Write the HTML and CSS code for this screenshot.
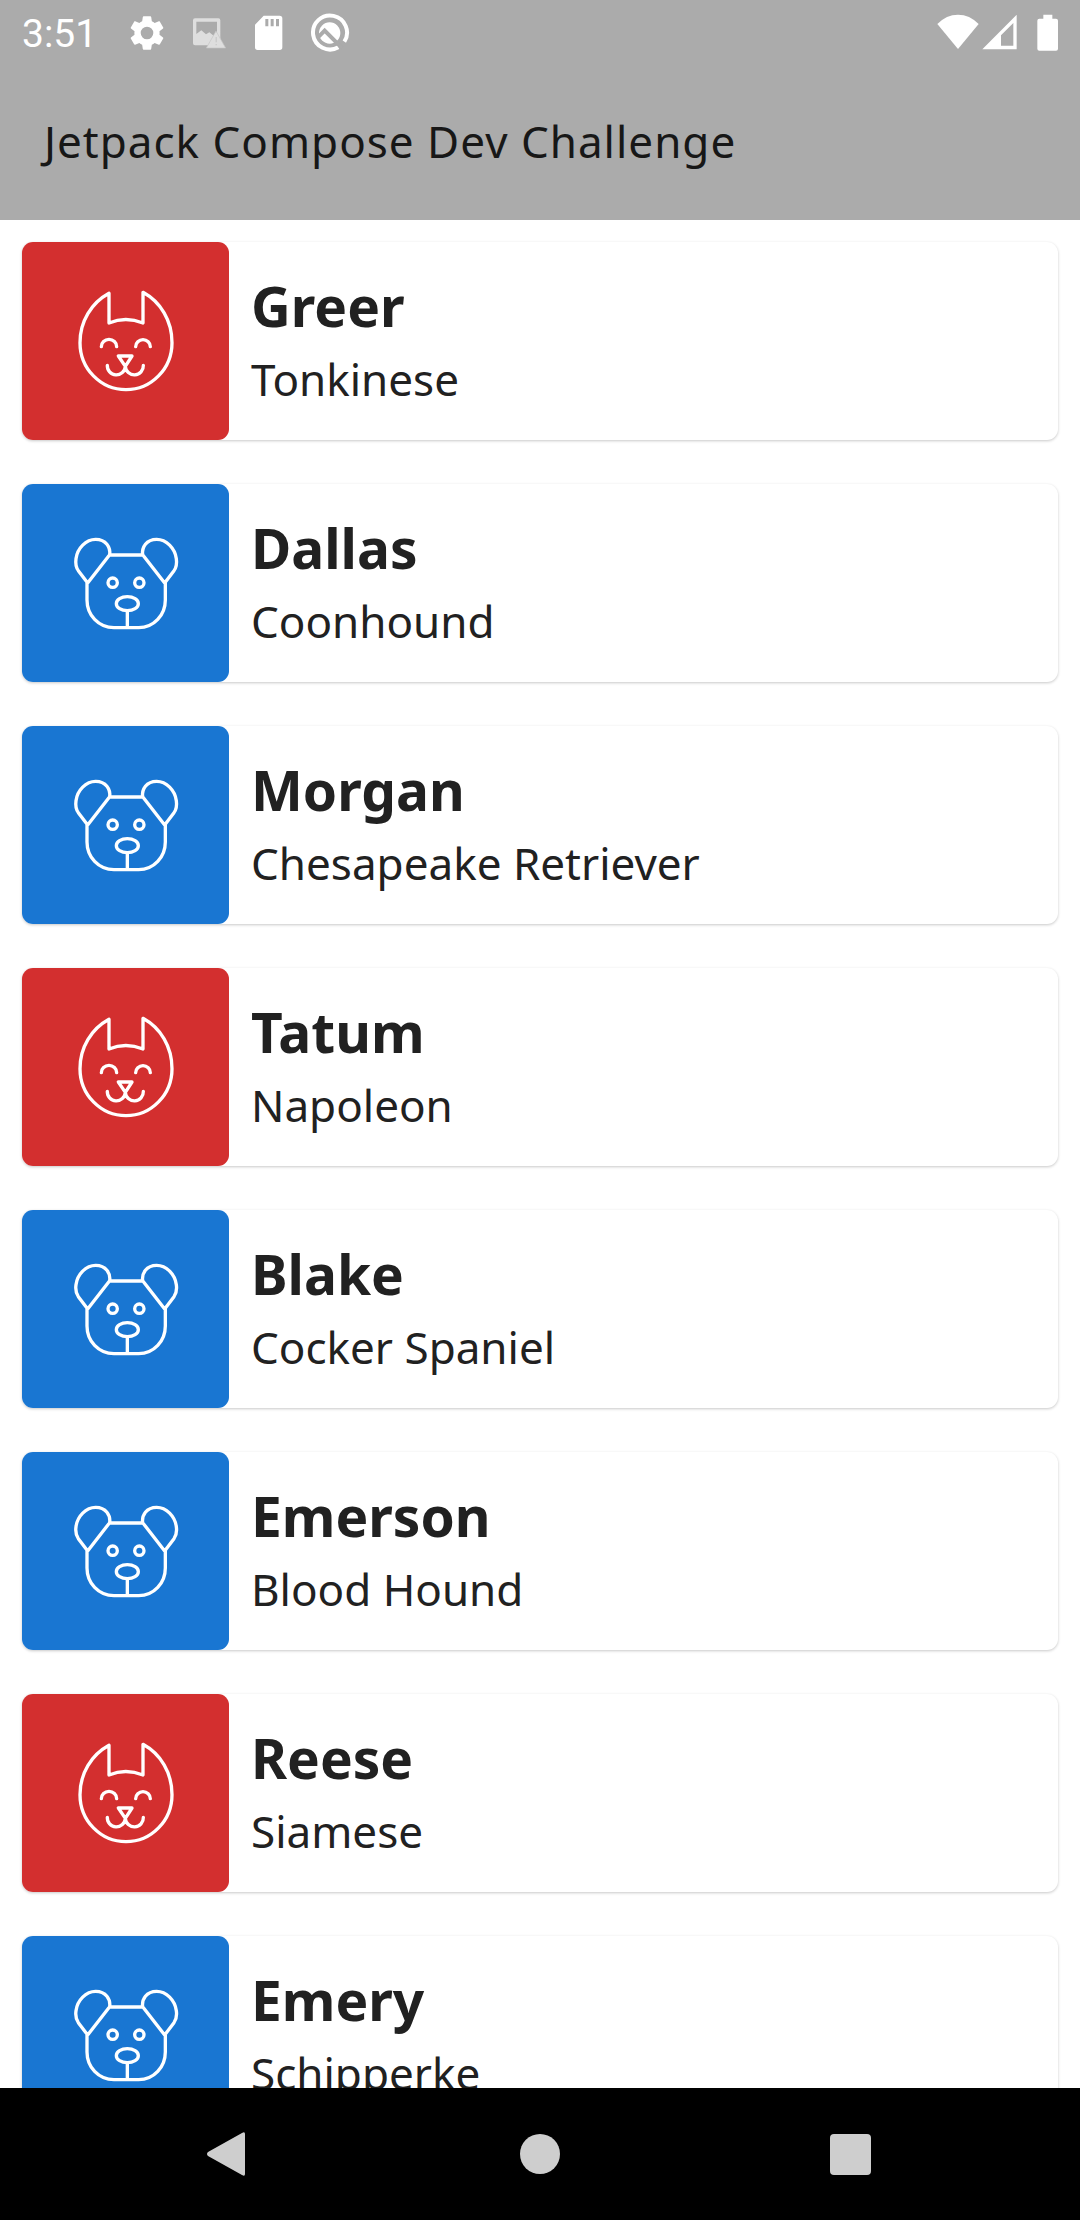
FILE: index.html
```html
<!DOCTYPE html>
<html lang="en">
<head>
<meta charset="utf-8">
<meta name="viewport" content="width=device-width, initial-scale=1">
<title>Jetpack Compose Dev Challenge</title>
<link rel="stylesheet" href="styles.css">
</head>
<body>
<svg class="sprite" aria-hidden="true">
  <symbol id="cat" viewBox="0 15 393 396">
    <path d="M147 70V159Q197 138 249 159V67C302 96 336 152 336 218A138 141 0 0 1 60 218C60 154 94 99 147 70Z"/>
    <path d="M124 230a22 21 0 0 1 46 0M227 230a22 21 0 0 1 44 0M175 258H216L196 289ZM142 286a27 27 0 0 0 54 3a27 27 0 0 0 54-3"/>
  </symbol>
  <symbol id="dog" viewBox="0 -9 393 396">
    <path d="M83 189L55 152C46 139 47 123 48 116C52 85 78 58 107 58C138 58 152 82 149 104ZM314 189L342 152C351 139 350 123 349 116C345 85 319 58 290 58C259 58 245 82 248 104ZM149 105H248M81 187V240C81 285 115 323 162 323H236C282 323 316 285 316 240V187M202 272V323"/>
    <circle cx="158" cy="188" r="14"/><circle cx="238" cy="188" r="14"/><ellipse cx="202" cy="251" rx="33" ry="21"/>
  </symbol>
</svg>
<div class="app">
  <header class="top">
    <div class="status">
      <span class="time">3:51</span>
      <div class="notices">
        <svg class="icon" viewBox="0 0 24 24"><path fill-rule="evenodd" d="M19.14 12.94c.04-.3.06-.61.06-.94 0-.32-.02-.64-.07-.94l2.03-1.58c.18-.14.23-.41.12-.61l-1.92-3.32c-.12-.22-.37-.29-.59-.22l-2.39.96c-.5-.38-1.03-.7-1.62-.94l-.36-2.54c-.04-.24-.24-.41-.48-.41h-3.84c-.24 0-.43.17-.47.41l-.36 2.54c-.59.24-1.13.57-1.62.94l-2.39-.96c-.22-.08-.47 0-.59.22L2.74 8.87c-.12.21-.08.47.12.61l2.03 1.58c-.05.3-.09.63-.09.94s.02.64.07.94l-2.03 1.58c-.18.14-.23.41-.12.61l1.92 3.32c.12.22.37.29.59.22l2.39-.96c.5.38 1.03.7 1.62.94l.36 2.54c.05.24.24.41.48.41h3.84c.24 0 .44-.17.47-.41l.36-2.54c.59-.24 1.13-.56 1.62-.94l2.39.96c.22.08.47 0 .59-.22l1.92-3.32c.12-.22.07-.47-.12-.61zM12 15.6a3.6 3.6 0 1 1 0-7.2 3.6 3.6 0 0 1 0 7.2z"/></svg>
        <svg class="icon icon-dim" viewBox="560 37 126 126"><path fill-rule="evenodd" d="M584 56h70q6 0 6 6v75h-76q-6 0-6-6V62q0-6 6-6zM588 66v37l15-11 14 12 10-6 13 10 10-10V66z"/><path class="edged" d="M647 94l29 51h-58z"/><path class="mark" d="M646 112h3v16h-3zM646 133h3v4h-3z"/></svg>
        <svg class="icon" viewBox="743 37 126 126"><path fill-rule="evenodd" d="M790 48h48q8 0 8 8v87q0 8-8 8h-66q-8 0-8-8V75zM795 58v22h9V58zM811 58v22h9V58zM827 58v22h9V58z"/></svg>
        <svg class="icon" viewBox="926 37 126 126"><path class="ring" d="M1014 143A51 51 0 1 1 1032 126"/><circle cx="988" cy="100" r="32"/><path class="cut" d="M950 116L973 93L1026 146"/></svg>
      </div>
      <div class="signals">
        <svg class="icon" viewBox="52 37 126 126"><path d="M53 73Q80 45 115 45T177 73L115 148Z"/></svg>
        <svg class="icon-cell" viewBox="186 37 105 126"><path fill-rule="evenodd" d="M290 45V149H187ZM280 70L243 107V138H280Z"/></svg>
        <svg class="icon-battery" viewBox="350 37 63 126"><path d="M369 45h27v12h11q6 0 6 6v84q0 6-6 6h-50q-6 0-6-6V63q0-6 6-6h12z"/></svg>
      </div>
    </div>
    <h1 class="title">Jetpack Compose Dev Challenge</h1>
  </header>
  <main class="list">
    <article class="card"><div class="thumb cat"><svg class="face"><use href="#cat"/></svg></div><div class="info"><h2 class="name">Greer</h2><p class="breed">Tonkinese</p></div></article>
    <article class="card"><div class="thumb dog"><svg class="face"><use href="#dog"/></svg></div><div class="info"><h2 class="name">Dallas</h2><p class="breed">Coonhound</p></div></article>
    <article class="card"><div class="thumb dog"><svg class="face"><use href="#dog"/></svg></div><div class="info"><h2 class="name">Morgan</h2><p class="breed">Chesapeake Retriever</p></div></article>
    <article class="card"><div class="thumb cat"><svg class="face"><use href="#cat"/></svg></div><div class="info"><h2 class="name">Tatum</h2><p class="breed">Napoleon</p></div></article>
    <article class="card"><div class="thumb dog"><svg class="face"><use href="#dog"/></svg></div><div class="info"><h2 class="name">Blake</h2><p class="breed">Cocker Spaniel</p></div></article>
    <article class="card"><div class="thumb dog"><svg class="face"><use href="#dog"/></svg></div><div class="info"><h2 class="name">Emerson</h2><p class="breed">Blood Hound</p></div></article>
    <article class="card"><div class="thumb cat"><svg class="face"><use href="#cat"/></svg></div><div class="info"><h2 class="name">Reese</h2><p class="breed">Siamese</p></div></article>
    <article class="card"><div class="thumb dog"><svg class="face"><use href="#dog"/></svg></div><div class="info"><h2 class="name">Emery</h2><p class="breed">Schipperke</p></div></article>
  </main>
  <nav class="nav" aria-label="System">
    <button class="key" type="button" aria-label="Back"><svg class="glyph" viewBox="0 0 48 48"><path d="M39 4V44Q39 47 36 45L2 26Q0 24 2 22L36 3Q39 1 39 4Z"/></svg></button>
    <button class="key" type="button" aria-label="Home"><svg class="glyph" viewBox="0 0 48 48"><circle cx="24" cy="24" r="20"/></svg></button>
    <button class="key" type="button" aria-label="Recent apps"><svg class="glyph" viewBox="0 0 48 48"><rect x="4" y="4" width="41" height="41" rx="4"/></svg></button>
  </nav>
</div>
</body>
</html>
```
FILE: styles.css
```css
* {
  box-sizing: border-box;
}

body,
h1,
h2,
p {
  margin: 0;
}

body {
  background: #fff;
  color: #212121;
  font-family: "Noto Sans", sans-serif;
}

.sprite {
  position: absolute;
  width: 0;
  height: 0;
}

.app {
  display: flex;
  flex-direction: column;
  height: 100vh;
}

.top {
  flex: none;
  background: #ababab;
}

.status {
  display: flex;
  align-items: center;
  height: 66px;
  padding: 0 22px;
  color: #fff;
}

.time {
  min-width: 104px;
  padding-top: 2px;
  font: 39px/44px Roboto, sans-serif;
}

.notices {
  display: flex;
  gap: 19px;
}

.signals {
  display: flex;
  gap: 3px;
  margin-left: auto;
}

.icon,
.icon-cell,
.icon-battery {
  width: 42px;
  height: 42px;
  fill: #fff;
}

.icon-cell {
  width: 35px;
}

.icon-battery {
  width: 21px;
  margin-left: 17px;
}

.icon-dim {
  fill: #dedede;
}

.edged {
  stroke: #c4c4c4;
  stroke-width: 2;
}

.mark {
  fill: #c4c4c4;
}

.ring {
  fill: none;
  stroke: #fff;
  stroke-width: 12;
}

.cut {
  fill: none;
  stroke: #ababab;
  stroke-width: 12;
}

.title {
  padding: 44px 44px 48px;
  color: #171717;
  font-size: 44px;
  font-weight: 400;
  line-height: 62px;
  letter-spacing: 1px;
}

.list {
  display: flex;
  flex: 1;
  flex-direction: column;
  gap: 44px;
  min-height: 0;
  padding: 22px;
  overflow: hidden;
}

.card {
  display: flex;
  flex: none;
  background: #fff;
  border-radius: 11px;
  box-shadow: 0 1px 3px rgba(0, 0, 0, 0.22);
}

.thumb {
  display: flex;
  align-items: center;
  justify-content: center;
  width: 207px;
  border-radius: 11px;
}

.cat {
  background: #d32f2f;
}

.dog {
  background: #1976d2;
}

.face {
  width: 131px;
  height: 132px;
  fill: none;
  stroke: #fff;
  stroke-width: 10;
  stroke-linecap: round;
  stroke-linejoin: round;
}

.info {
  flex: 1;
  padding: 22px 22px 30px;
}

.name {
  font-size: 55px;
  font-weight: 700;
  line-height: 84px;
}

.breed {
  font-size: 44px;
  line-height: 62px;
}

.nav {
  display: grid;
  flex: none;
  grid-template-columns: repeat(3, minmax(0, 310px));
  justify-content: center;
  height: 132px;
  background: #000;
}

.key {
  display: flex;
  align-items: center;
  justify-content: center;
  padding: 0;
  border: 0;
  background: none;
}

.glyph {
  width: 48px;
  height: 48px;
  fill: #cecece;
}
```
